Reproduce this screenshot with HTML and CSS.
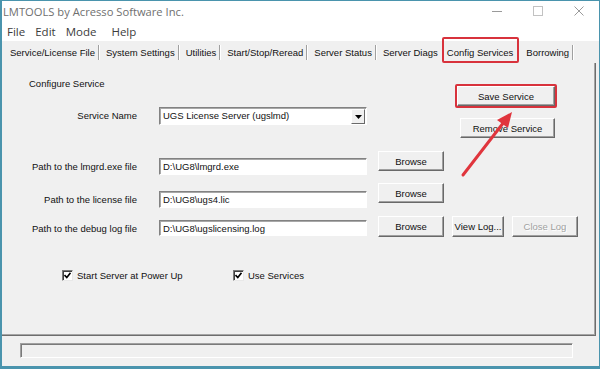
FILE: index.html
```html
<!DOCTYPE html>
<html lang="en">
<head>
    <meta charset="UTF-8">
    <title>LMTOOLS by Acresso Software Inc.</title>
    <link rel="stylesheet" href="styles.css">
</head>
<body>

<div class="window">
    <div class="titlebar">
        <span class="title">LMTOOLS by Acresso Software Inc.</span>
        <div class="controls">
            <span class="ctl"><svg width="10" height="10"><line x1="0" y1="5.5" x2="10" y2="5.5" stroke="#9a9a9a"/></svg></span>
            <span class="ctl"><svg width="10" height="10"><rect x="0.5" y="0.5" width="9" height="9" fill="none" stroke="#c2c2c2"/></svg></span>
            <span class="ctl"><svg width="10" height="10"><path d="M0.5 0.5 L9.5 9.5 M9.5 0.5 L0.5 9.5" stroke="#9a9a9a"/></svg></span>
        </div>
    </div>

    <div class="menubar">
        <span class="menu-item">File</span>
        <span class="menu-item">Edit</span>
        <span class="menu-item">Mode</span>
        <span class="menu-item">Help</span>
    </div>

    <div class="tabs">
        <span class="tab">Service/License File</span>
        <span class="tab">System Settings</span>
        <span class="tab">Utilities</span>
        <span class="tab">Start/Stop/Reread</span>
        <span class="tab">Server Status</span>
        <span class="tab tab-plain">Server Diags</span>
        <span class="tab tab-selected">Config Services</span>
        <span class="tab">Borrowing</span>
    </div>

    <div class="panel">
        <div class="top">
            <div class="top-left">
                <div class="heading">Configure Service</div>
                <div class="service-row">
                    <span class="label">Service Name</span>
                    <div class="select">
                        <span class="value">UGS License Server (ugslmd)</span>
                        <span class="drop"><svg width="7" height="4"><path d="M0 0 H7 L3.5 4 Z" fill="#000"/></svg></span>
                    </div>
                </div>
            </div>
            <div class="top-right">
                <div class="highlight"><button class="btn btn-save">Save Service</button></div>
                <button class="btn btn-remove">Remove Service</button>
            </div>
        </div>

        <div class="path-row row-1">
            <div class="field">
                <span class="label">Path to the lmgrd.exe file</span>
                <div class="input">D:\UG8\lmgrd.exe</div>
            </div>
            <button class="btn btn-browse">Browse</button>
        </div>

        <div class="path-row row-2">
            <div class="field">
                <span class="label">Path to the license file</span>
                <div class="input">D:\UG8\ugs4.lic</div>
            </div>
            <button class="btn btn-browse">Browse</button>
        </div>

        <div class="path-row row-3">
            <div class="field">
                <span class="label">Path to the debug log file</span>
                <div class="input">D:\UG8\ugslicensing.log</div>
            </div>
            <button class="btn btn-browse">Browse</button>
            <button class="btn btn-log">View Log...</button>
            <button class="btn btn-close" disabled>Close Log</button>
        </div>

        <div class="checks">
            <label class="check check-first">
                <span class="box"><svg width="7" height="7"><path d="M0.5 3 L2.8 5.6 L6.5 0.8" fill="none" stroke="#000" stroke-width="1.6"/></svg></span>
                Start Server at Power Up
            </label>
            <label class="check">
                <span class="box"><svg width="7" height="7"><path d="M0.5 3 L2.8 5.6 L6.5 0.8" fill="none" stroke="#000" stroke-width="1.6"/></svg></span>
                Use Services
            </label>
        </div>

        <!-- red annotation arrow pointing at Save Service -->
        <svg class="arrow" width="594" height="273">
            <line x1="461" y1="112" x2="502" y2="59" stroke="#e0353d" stroke-width="3" stroke-linecap="round"/>
            <polygon points="510,49 495,57 506,65" fill="#e0353d"/>
        </svg>
    </div>

    <div class="footer">
        <div class="status"></div>
    </div>
</div>

</body>
</html>
```

FILE: styles.css
```css
body {
    margin: 0;
    font-family: "Liberation Sans", Arial, sans-serif;
    font-size: 9.5px;
    color: #111;
    background: #fff;
}
.window {
    width: 600px;
    height: 369px;
    box-sizing: border-box;
    border: 1px solid #4a94ad;
    border-left-width: 2px;
    border-bottom-width: 3px;
    background: #f0f0f0;
    display: flex;
    flex-direction: column;
}
.titlebar {
    height: 20px;
    background: #fff;
    display: flex;
    align-items: center;
}
.title {
    font-family: "Open Sans", "Noto Sans", sans-serif;
    font-size: 11.2px;
    color: #6f6f6f;
    padding-left: 1px;
}
.controls {
    margin-left: auto;
    display: flex;
}
.ctl {
    width: 41px;
    height: 20px;
    display: flex;
    align-items: center;
    justify-content: center;
}
.menubar {
    height: 20px;
    background: #fff;
    display: flex;
    align-items: center;
    font-family: "Open Sans", "Noto Sans", sans-serif;
    font-size: 11.5px;
    color: #3c3c3c;
}
.menu-item {
    padding: 0 5px;
}
.menu-item:last-child {
    padding-left: 10px;
}
.tabs {
    height: 22px;
    display: flex;
    align-items: flex-start;
    padding-left: 1px;
}
.tab {
    margin-top: 4px;
    height: 15px;
    line-height: 15px;
    padding: 0 3px 0 7px;
    border-right: 1px solid #a0a0a0;
    box-shadow: 1px 0 0 #fff;
    white-space: nowrap;
}
.tab-plain {
    border-right-color: transparent;
    box-shadow: none;
}
.tab-selected {
    margin-top: -4px;
    height: 26px;
    box-sizing: border-box;
    border: 2px solid #d8323c;
    border-radius: 2px;
    padding: 6px 4px 0 3px;
    box-shadow: none;
}
.panel {
    position: relative;
    height: 273px;
    margin-right: 3px;
    box-sizing: border-box;
    border-right: 1px solid #6d6d6d;
    border-bottom: 1px solid #6d6d6d;
    box-shadow: inset -1px -1px 0 #a5a5a5;
}
.top {
    display: flex;
    align-items: flex-start;
    padding-top: 15px;
}
.heading {
    margin-left: 27px;
    height: 12px;
    line-height: 12px;
}
.label {
    width: 135px;
    text-align: right;
    flex-shrink: 0;
}
.service-row {
    display: flex;
    margin-top: 17px;
    line-height: 18px;
}
.select {
    margin-left: 22px;
    width: 208px;
    height: 18px;
    box-sizing: border-box;
    display: flex;
    align-items: center;
    background: #fff;
    border: 1px solid;
    border-color: #828282 #fff #fff #828282;
    box-shadow: inset 1px 1px 0 #a8a8a8;
}
.value {
    padding-left: 3px;
}
.drop {
    margin-left: auto;
    margin-right: 1px;
    width: 14px;
    height: 15px;
    box-sizing: border-box;
    display: flex;
    align-items: center;
    justify-content: center;
    background: #f0f0f0;
    border: 1px solid;
    border-color: #fff #696969 #696969 #fff;
    padding-top: 2px;
}
.top-right {
    margin-left: auto;
    margin-right: 38px;
    padding-top: 6px;
    display: flex;
    flex-direction: column;
    align-items: flex-start;
}
.highlight {
    border: 2px solid #d8323c;
    border-radius: 2px;
    display: flex;
}
.btn {
    font: inherit;
    color: #111;
    background: #f0f0f0;
    border: 1px solid;
    border-color: #fff #696969 #696969 #fff;
    box-shadow: inset -1px -1px 0 #a0a0a0;
    padding: 0;
    height: 20px;
}
.btn-save {
    width: 98px;
}
.btn-remove {
    width: 95px;
    margin: 10px 0 0 5px;
}
.path-row {
    display: flex;
    align-items: flex-start;
}
.field {
    display: flex;
    line-height: 17px;
}
.input {
    margin-left: 22px;
    width: 208px;
    height: 17px;
    box-sizing: border-box;
    background: #fff;
    border: 1px solid;
    border-color: #828282 #fff #fff #828282;
    box-shadow: inset 1px 1px 0 #a8a8a8;
    padding-left: 3px;
    line-height: 15px;
}
.btn-browse {
    margin-left: 11px;
    width: 66px;
}
.row-1 {
    margin-top: 13px;
}
.row-1 .field {
    margin-top: 7px;
}
.row-2 {
    margin-top: 8px;
}
.row-2 .field {
    margin-top: 8px;
}
.row-3 {
    margin-top: 8px;
}
.row-3 .field {
    margin-top: 4px;
}
.row-3 .input {
    height: 16px;
}
.row-3 .btn {
    height: 21px;
}
.btn-log {
    margin-left: 8px;
    width: 52px;
}
.btn-close {
    margin-left: 8px;
    width: 66px;
    color: #a0a0a0;
    text-shadow: 1px 1px 0 #fff;
}
.checks {
    display: flex;
    align-items: center;
    margin: 32px 0 0 60px;
    height: 12px;
}
.check {
    display: flex;
    align-items: center;
    gap: 4px;
}
.check-first {
    width: 171px;
}
.box {
    width: 11px;
    height: 11px;
    box-sizing: border-box;
    display: flex;
    align-items: center;
    justify-content: center;
    background: #fff;
    border: 1px solid;
    border-color: #7a7a7a #e8e8e8 #e8e8e8 #7a7a7a;
    box-shadow: inset 1px 1px 0 #404040;
}
.arrow {
    position: absolute;
    left: 0;
    top: 0;
    pointer-events: none;
}
.footer {
    height: 30px;
}
.status {
    margin: 7px 0 0 18px;
    width: 553px;
    height: 15px;
    box-sizing: border-box;
    border: 1px solid;
    border-color: #a0a0a0 #fff #fff #a0a0a0;
    box-shadow: inset 1px 1px 0 #7a7a7a;
}
```
